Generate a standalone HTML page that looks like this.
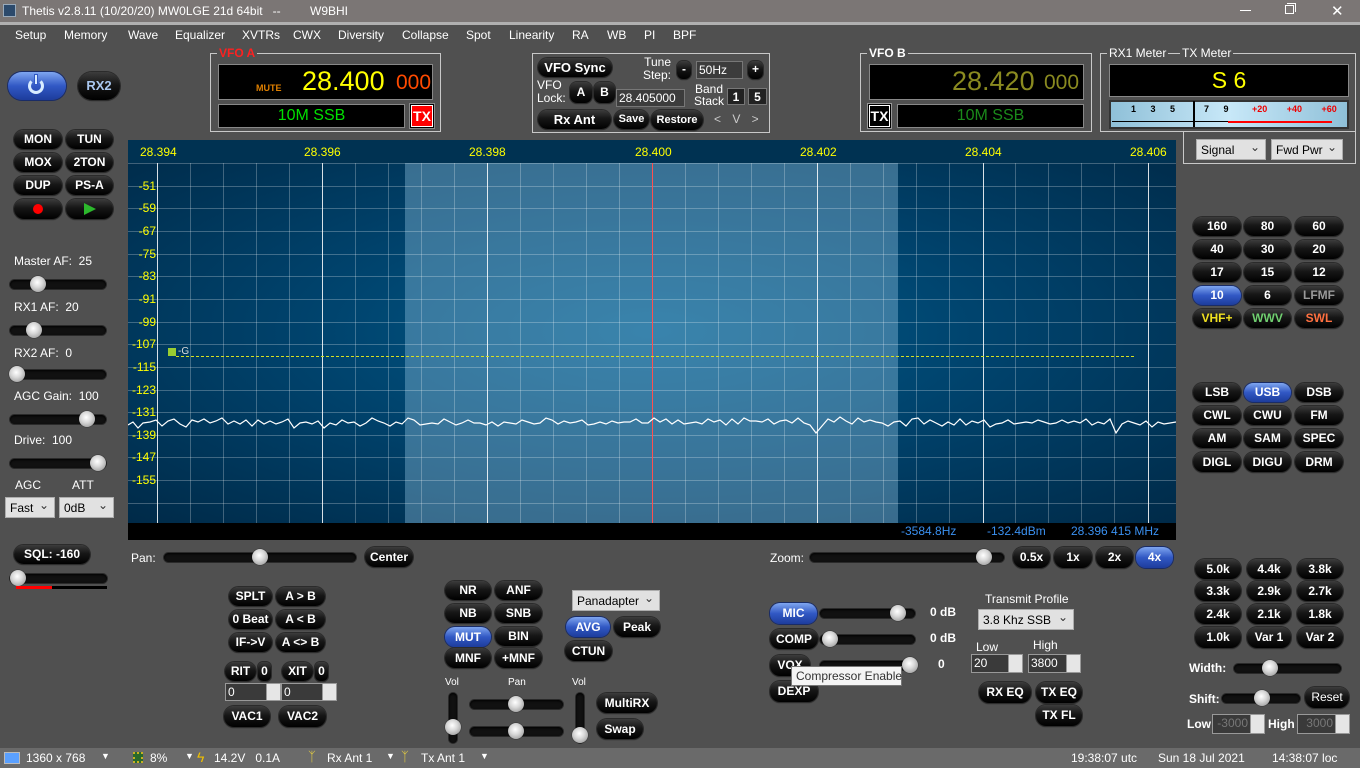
<!DOCTYPE html>
<html><head><meta charset="utf-8">
<style>
*{margin:0;padding:0;box-sizing:border-box}
body{width:1360px;height:768px;overflow:hidden;background:#505050;font-family:"Liberation Sans",Arial,sans-serif;position:relative;color:#fff}
div,span{position:absolute}
.t{font-size:12px;white-space:nowrap;color:#fff}
.b{border-radius:10px;background:linear-gradient(#3c3c3c,#161616 45%,#000);color:#fff;font:bold 12px "Liberation Sans",sans-serif;text-align:center;box-shadow:0 0 0 1px #2b2b2b,0 1px 1px #222;white-space:nowrap}
.bl{background:linear-gradient(#7fa6f0,#3158c4 50%,#1d3c9c);box-shadow:0 0 0 1px #1a2c66}
.g{border:1px solid #c8c8c8}
.gl{font-size:12px;background:#505050;padding:0 2px;white-space:nowrap}
.tr{height:9px;border-radius:5px;background:#111;box-shadow:inset 0 1px 2px #000,0 0 0 1px #2a2a2a}
.th{width:16px;height:16px;border-radius:50%;background:radial-gradient(circle at 45% 40%,#fff,#d8d8d8 40%,#888 100%);box-shadow:0 0 1px #000}
.sel{background:#e1e1e1;color:#000;font-size:12px;border:1px solid #adadad;padding:3px 4px;white-space:nowrap}
.sel:after{content:"⌄";position:absolute;right:5px;top:0px;font-size:12px;color:#333}
.inp{background:#3c3c3c;border:1px solid #777;font-size:12px;color:#fff;padding:1px 2px;white-space:nowrap}
.sp{background:#3a3a3a;border:1px solid #999;font-size:12px;color:#fff;padding:1px 2px}
.sp:after{content:"";position:absolute;right:0;top:0;width:13px;height:100%;background:#e6e6e6;border-left:1px solid #999}
.y{color:#ffff00;font-size:12px;white-space:nowrap}
.db{color:#ffff00;font-size:12px;width:28px;text-align:right;left:128px}
</style></head><body>

<!-- title bar -->
<div style="left:0;top:0;width:1360px;height:22px;background:#7b7675"></div>
<div style="left:3px;top:4px;width:13px;height:13px;background:#2c4a6c;border:1px solid #9ab"></div>
<div class="t" style="left:22px;top:4px;color:#fff">Thetis v2.8.11 (10/20/20) MW0LGE 21d 64bit&nbsp;&nbsp; --</div>
<div class="t" style="left:310px;top:4px">W9BHI</div>
<div style="left:1240px;top:10px;width:11px;height:1px;background:#fff"></div>
<div style="left:1285px;top:5px;width:9px;height:9px;border:1px solid #fff"></div>
<div style="left:1287px;top:3px;width:9px;height:9px;border-top:1px solid #fff;border-right:1px solid #fff"></div>
<div class="t" style="left:1331px;top:2px;font-size:15px">✕</div>
<div style="left:0;top:22px;width:1360px;height:3px;background:#b0b0b0"></div>

<!-- menu -->
<div class="t" style="left:15px;top:28px">Setup</div>
<div class="t" style="left:64px;top:28px">Memory</div>
<div class="t" style="left:128px;top:28px">Wave</div>
<div class="t" style="left:175px;top:28px">Equalizer</div>
<div class="t" style="left:242px;top:28px">XVTRs</div>
<div class="t" style="left:293px;top:28px">CWX</div>
<div class="t" style="left:338px;top:28px">Diversity</div>
<div class="t" style="left:402px;top:28px">Collapse</div>
<div class="t" style="left:466px;top:28px">Spot</div>
<div class="t" style="left:509px;top:28px">Linearity</div>
<div class="t" style="left:572px;top:28px">RA</div>
<div class="t" style="left:607px;top:28px">WB</div>
<div class="t" style="left:644px;top:28px">PI</div>
<div class="t" style="left:673px;top:28px">BPF</div>

<!-- VFO A -->
<div class="g" style="left:210px;top:53px;width:231px;height:79px"></div>
<div class="gl" style="left:217px;top:46px;color:#ff2020;font-weight:bold">VFO A</div>
<div style="left:218px;top:64px;width:215px;height:36px;background:#000;border:1px solid #888"></div>
<div style="left:256px;top:83px;color:#e08000;font-size:9px;font-weight:bold">MUTE</div>
<div style="left:302px;top:66px;color:#ffff00;font-size:27px">28.400</div>
<div style="left:396px;top:71px;color:#ff4a00;font-size:21px">000</div>
<div style="left:218px;top:104px;width:187px;height:24px;background:#000;border:1px solid #888;color:#00e000;font-size:16px;text-align:center;line-height:22px">10M SSB</div>
<div style="left:409px;top:103px;width:26px;height:26px;background:#000;border:1px solid #888"></div>
<div style="left:411px;top:105px;width:22px;height:22px;background:#f00;border:1px solid #fff;color:#fff;font:bold 14px 'Liberation Sans';text-align:center;line-height:20px">TX</div>

<!-- VFO sync group -->
<div class="g" style="left:532px;top:53px;width:238px;height:80px"></div>
<div class="b" style="left:538px;top:58px;width:74px;height:19px;line-height:19px;font-size:13px">VFO Sync</div>
<div class="t" style="left:641px;top:56px;text-align:right;line-height:13px;width:30px">Tune<br>Step:</div>
<div class="b" style="left:677px;top:61px;width:14px;height:18px;line-height:17px;border-radius:6px">-</div>
<div class="inp" style="left:696px;top:61px;width:47px;height:18px">50Hz</div>
<div class="b" style="left:748px;top:61px;width:15px;height:18px;line-height:17px;border-radius:6px">+</div>
<div class="t" style="left:537px;top:79px;line-height:13px">VFO<br>Lock:</div>
<div class="b" style="left:570px;top:82px;width:22px;height:21px;line-height:21px;border-radius:7px">A</div>
<div class="b" style="left:594px;top:82px;width:21px;height:21px;line-height:21px;border-radius:7px">B</div>
<div class="inp" style="left:616px;top:89px;width:69px;height:18px">28.405000</div>
<div class="t" style="left:694px;top:83px;line-height:12px;text-align:center;width:30px">Band<br>Stack</div>
<div class="inp" style="left:727px;top:88px;width:18px;height:17px;font-weight:bold;text-align:center;background:#222">1</div>
<div class="inp" style="left:748px;top:88px;width:19px;height:17px;font-weight:bold;text-align:center;background:#222">5</div>
<div class="b" style="left:538px;top:110px;width:73px;height:19px;line-height:19px;font-size:13px">Rx Ant</div>
<div class="b" style="left:614px;top:110px;width:35px;height:19px;line-height:19px;font-size:11px">Save</div>
<div class="b" style="left:651px;top:110px;width:52px;height:20px;line-height:20px;font-size:11px">Restore</div>
<div class="t" style="left:714px;top:112px;color:#ccc;word-spacing:8px">&lt; V &gt;</div>

<!-- VFO B -->
<div class="g" style="left:860px;top:53px;width:232px;height:79px"></div>
<div class="gl" style="left:867px;top:46px;font-weight:bold">VFO B</div>
<div style="left:869px;top:64px;width:215px;height:36px;background:#000;border:1px solid #888"></div>
<div style="left:952px;top:66px;color:#8a8a20;font-size:27px">28.420</div>
<div style="left:1044px;top:71px;color:#8a8a20;font-size:21px">000</div>
<div style="left:867px;top:103px;width:25px;height:26px;background:#000;border:1px solid #999"></div>
<div style="left:869px;top:105px;width:21px;height:22px;background:#000;border:1px solid #fff;font:bold 14px 'Liberation Sans';text-align:center;line-height:20px">TX</div>
<div style="left:897px;top:104px;width:187px;height:24px;background:#000;border:1px solid #888;color:#1a8a1a;font-size:16px;text-align:center;line-height:22px">10M SSB</div>

<!-- Meter -->
<div class="g" style="left:1100px;top:53px;width:256px;height:79px"></div>
<div class="gl" style="left:1107px;top:46px">RX1 Meter</div>
<div class="gl" style="left:1180px;top:46px">TX Meter</div>
<div style="left:1109px;top:64px;width:240px;height:33px;background:#000;border:1px solid #888;color:#ffff00;font-size:23px;text-align:center;line-height:31px">S 6</div>
<div style="left:1109px;top:100px;width:240px;height:29px;border:2px solid #333;background:linear-gradient(90deg,#8fc0d8,#c8e8f8 50%,#8fc0d8)"></div>
<div style="left:1112px;top:121px;width:120px;height:1px;background:#000"></div>
<div style="left:1228px;top:121px;width:104px;height:2px;background:#f00"></div>
<div style="left:1193px;top:101px;width:2px;height:26px;background:#000"></div>
<div style="left:1131px;top:104px;color:#000;font-size:9px;font-weight:bold;word-spacing:12px">1 3 5 &nbsp;7 9</div>
<div style="left:1252px;top:104px;color:#e00;font-size:9px;font-weight:bold;word-spacing:17px">+20 +40 +60</div>
<div class="g" style="left:1183px;top:132px;width:173px;height:32px;border-top:none"></div>
<div class="sel" style="left:1196px;top:139px;width:70px;height:21px">Signal</div>
<div class="sel" style="left:1271px;top:139px;width:72px;height:21px">Fwd Pwr</div>

<!-- left panel -->
<div class="b bl" style="left:8px;top:72px;width:58px;height:28px;border-radius:14px"></div>
<div style="left:28px;top:78px;width:16px;height:16px;border:3px solid #d8ecff;border-radius:50%;border-top-color:transparent"></div>
<div style="left:34px;top:74px;width:4px;height:11px;background:#d8ecff;border:1px solid #3158c4"></div>
<div class="b" style="left:78px;top:72px;width:42px;height:28px;line-height:28px;font-size:13px;color:#aac8f0;border-radius:14px">RX2</div>

<div class="b" style="left:14px;top:130px;width:48px;height:19px;line-height:19px">MON</div>
<div class="b" style="left:66px;top:130px;width:47px;height:19px;line-height:19px">TUN</div>
<div class="b" style="left:14px;top:153px;width:48px;height:19px;line-height:19px">MOX</div>
<div class="b" style="left:66px;top:153px;width:47px;height:19px;line-height:19px">2TON</div>
<div class="b" style="left:14px;top:176px;width:48px;height:19px;line-height:19px">DUP</div>
<div class="b" style="left:66px;top:176px;width:47px;height:19px;line-height:19px">PS-A</div>
<div class="b" style="left:14px;top:199px;width:48px;height:20px"></div>
<div style="left:33px;top:204px;width:10px;height:10px;border-radius:50%;background:#f00"></div>
<div class="b" style="left:66px;top:199px;width:47px;height:20px"></div>
<div style="left:84px;top:203px;width:0;height:0;border-left:12px solid #2cb82c;border-top:6px solid transparent;border-bottom:6px solid transparent"></div>

<div class="t" style="left:14px;top:254px">Master AF:&nbsp; 25</div>
<div class="tr" style="left:10px;top:280px;width:96px"></div><div class="th" style="left:30px;top:276px"></div>
<div class="t" style="left:14px;top:300px">RX1 AF:&nbsp; 20</div>
<div class="tr" style="left:10px;top:326px;width:96px"></div><div class="th" style="left:26px;top:322px"></div>
<div class="t" style="left:14px;top:346px">RX2 AF:&nbsp; 0</div>
<div class="tr" style="left:10px;top:370px;width:96px"></div><div class="th" style="left:9px;top:366px"></div>
<div class="t" style="left:14px;top:389px">AGC Gain:&nbsp; 100</div>
<div class="tr" style="left:10px;top:415px;width:96px"></div><div class="th" style="left:79px;top:411px"></div>
<div class="t" style="left:14px;top:433px">Drive:&nbsp; 100</div>
<div class="tr" style="left:10px;top:459px;width:96px"></div><div class="th" style="left:90px;top:455px"></div>
<div class="t" style="left:15px;top:478px">AGC</div>
<div class="t" style="left:72px;top:478px">ATT</div>
<div class="sel" style="left:5px;top:497px;width:50px;height:21px">Fast</div>
<div class="sel" style="left:59px;top:497px;width:55px;height:21px">0dB</div>

<div class="b" style="left:14px;top:545px;width:76px;height:19px;line-height:19px">SQL: -160</div>
<div class="tr" style="left:10px;top:574px;width:97px"></div><div class="th" style="left:10px;top:570px"></div>
<div style="left:16px;top:586px;width:36px;height:3px;background:#f00"></div>
<div style="left:52px;top:586px;width:55px;height:3px;background:#000"></div>

<!-- spectrum -->
<div style="left:128px;top:140px;width:1048px;height:383px;background:radial-gradient(ellipse at 50% 50%,#005a8a 0%,#00416a 50%,#002a48 100%);overflow:hidden">
<div style="left:0;top:0;width:1048px;height:23px;background:#003252"></div>
<div style="left:277px;top:23px;width:493px;height:360px;background:rgba(150,200,230,0.38)"></div>
<svg width="1048" height="383" style="position:absolute;left:0;top:0">
<g stroke="rgba(255,255,255,0.25)" stroke-width="1">
<line x1="0" y1="23.5" x2="1048" y2="23.5"/><line x1="0" y1="46.5" x2="1048" y2="46.5"/><line x1="0" y1="68.5" x2="1048" y2="68.5"/><line x1="0" y1="91.5" x2="1048" y2="91.5"/><line x1="0" y1="114.5" x2="1048" y2="114.5"/><line x1="0" y1="136.5" x2="1048" y2="136.5"/><line x1="0" y1="159.5" x2="1048" y2="159.5"/><line x1="0" y1="182.5" x2="1048" y2="182.5"/><line x1="0" y1="204.5" x2="1048" y2="204.5"/><line x1="0" y1="227.5" x2="1048" y2="227.5"/><line x1="0" y1="250.5" x2="1048" y2="250.5"/><line x1="0" y1="272.5" x2="1048" y2="272.5"/><line x1="0" y1="295.5" x2="1048" y2="295.5"/><line x1="0" y1="317.5" x2="1048" y2="317.5"/><line x1="0" y1="340.5" x2="1048" y2="340.5"/><line x1="0" y1="363.5" x2="1048" y2="363.5"/>
<line x1="62.5" y1="23" x2="62.5" y2="383"/><line x1="95.5" y1="23" x2="95.5" y2="383"/><line x1="128.5" y1="23" x2="128.5" y2="383"/><line x1="161.5" y1="23" x2="161.5" y2="383"/><line x1="227.5" y1="23" x2="227.5" y2="383"/><line x1="260.5" y1="23" x2="260.5" y2="383"/><line x1="293.5" y1="23" x2="293.5" y2="383"/><line x1="326.5" y1="23" x2="326.5" y2="383"/><line x1="392.5" y1="23" x2="392.5" y2="383"/><line x1="425.5" y1="23" x2="425.5" y2="383"/><line x1="458.5" y1="23" x2="458.5" y2="383"/><line x1="491.5" y1="23" x2="491.5" y2="383"/><line x1="557.5" y1="23" x2="557.5" y2="383"/><line x1="590.5" y1="23" x2="590.5" y2="383"/><line x1="623.5" y1="23" x2="623.5" y2="383"/><line x1="656.5" y1="23" x2="656.5" y2="383"/><line x1="722.5" y1="23" x2="722.5" y2="383"/><line x1="755.5" y1="23" x2="755.5" y2="383"/><line x1="788.5" y1="23" x2="788.5" y2="383"/><line x1="821.5" y1="23" x2="821.5" y2="383"/><line x1="887.5" y1="23" x2="887.5" y2="383"/><line x1="920.5" y1="23" x2="920.5" y2="383"/><line x1="953.5" y1="23" x2="953.5" y2="383"/><line x1="986.5" y1="23" x2="986.5" y2="383"/>
</g>
<g stroke="rgba(255,255,255,0.85)" stroke-width="1">
<line x1="29.5" y1="23" x2="29.5" y2="383"/><line x1="194.5" y1="23" x2="194.5" y2="383"/><line x1="359.5" y1="23" x2="359.5" y2="383"/><line x1="689.5" y1="23" x2="689.5" y2="383"/><line x1="855.5" y1="23" x2="855.5" y2="383"/><line x1="1020.5" y1="23" x2="1020.5" y2="383"/>
</g>
<line x1="524.5" y1="23" x2="524.5" y2="383" stroke="#ff5050" stroke-width="1"/>
<rect x="40" y="208" width="8" height="8" fill="#9acd32"/>
<text x="50" y="214" fill="#ddd" font-size="10" font-family="Liberation Sans">-G</text>
<line x1="48" y1="216.5" x2="1007" y2="216.5" stroke="#d8e020" stroke-dasharray="3,2"/>
<polyline fill="none" stroke="#fff" stroke-width="1.2" points="0,285 5,282 10,288 15,283 22,282 28,280 34,286 40,281 46,279 52,284 58,287 64,280 70,282 76,279 82,283 88,281 94,278 100,284 106,281 112,284 118,280 124,286 130,280 136,284 142,281 148,284 154,282 160,279 166,288 172,283 178,282 184,284 190,281 196,288 202,283 208,285 214,280 220,283 226,282 232,286 238,283 244,278 250,281 256,283 262,286 268,282 274,284 280,278 286,280 292,285 298,284 304,283 310,284 316,279 322,282 328,285 334,283 340,280 346,283 352,283 358,285 364,282 370,286 376,282 382,283 388,284 394,280 400,282 406,284 412,283 418,278 424,280 430,284 436,281 442,283 448,282 454,280 460,285 466,284 472,282 478,284 484,281 490,283 496,282 502,282 508,279 514,283 520,283 526,278 532,282 538,279 544,284 550,280 556,284 562,283 568,282 574,284 580,279 586,282 592,280 598,285 604,279 610,284 616,278 622,281 628,281 634,282 640,279 646,284 652,281 658,280 664,283 670,278 676,283 682,285 688,293 694,286 700,279 706,282 712,277 718,281 724,284 730,278 736,282 742,280 748,282 754,283 760,286 766,282 772,281 778,286 784,279 790,278 796,284 802,280 808,283 814,286 820,282 826,285 832,279 838,285 844,281 850,283 856,280 862,287 868,284 874,283 880,280 886,284 892,283 898,282 904,283 910,280 916,282 922,284 928,283 934,280 940,283 946,281 952,283 958,279 964,285 970,282 976,284 982,279 988,293 994,284 1000,281 1006,283 1012,285 1018,281 1024,287 1030,282 1036,284 1042,283 1048,282"/>
</svg>
<div class="y" style="left:12px;top:5px">28.394</div>
<div class="y" style="left:176px;top:5px">28.396</div>
<div class="y" style="left:341px;top:5px">28.398</div>
<div class="y" style="left:507px;top:5px">28.400</div>
<div class="y" style="left:672px;top:5px">28.402</div>
<div class="y" style="left:837px;top:5px">28.404</div>
<div class="y" style="left:1002px;top:5px">28.406</div>
<div class="db" style="left:0;top:39px">-51</div>
<div class="db" style="left:0;top:61px">-59</div>
<div class="db" style="left:0;top:84px">-67</div>
<div class="db" style="left:0;top:107px">-75</div>
<div class="db" style="left:0;top:129px">-83</div>
<div class="db" style="left:0;top:152px">-91</div>
<div class="db" style="left:0;top:175px">-99</div>
<div class="db" style="left:0;top:197px">-107</div>
<div class="db" style="left:0;top:220px">-115</div>
<div class="db" style="left:0;top:243px">-123</div>
<div class="db" style="left:0;top:265px">-131</div>
<div class="db" style="left:0;top:288px">-139</div>
<div class="db" style="left:0;top:310px">-147</div>
<div class="db" style="left:0;top:333px">-155</div>
</div>
<div style="left:128px;top:523px;width:1048px;height:17px;background:#000"></div>
<div style="left:901px;top:524px;color:#3a90f0;font-size:12px">-3584.8Hz</div>
<div style="left:987px;top:524px;color:#3a90f0;font-size:12px">-132.4dBm</div>
<div style="left:1071px;top:524px;color:#3a90f0;font-size:12px">28.396 415 MHz</div>

<!-- pan / zoom -->
<div class="t" style="left:131px;top:551px">Pan:</div>
<div class="tr" style="left:164px;top:553px;width:192px"></div><div class="th" style="left:252px;top:549px"></div>
<div class="b" style="left:365px;top:547px;width:48px;height:20px;line-height:20px">Center</div>
<div class="t" style="left:770px;top:551px">Zoom:</div>
<div class="tr" style="left:810px;top:553px;width:194px"></div><div class="th" style="left:976px;top:549px"></div>
<div class="b" style="left:1013px;top:547px;width:37px;height:21px;line-height:21px">0.5x</div>
<div class="b" style="left:1054px;top:547px;width:38px;height:21px;line-height:21px">1x</div>
<div class="b" style="left:1096px;top:547px;width:37px;height:21px;line-height:21px">2x</div>
<div class="b bl" style="left:1136px;top:547px;width:37px;height:21px;line-height:21px">4x</div>

<!-- middle buttons -->
<div class="b" style="left:229px;top:587px;width:43px;height:19px;line-height:19px">SPLT</div>
<div class="b" style="left:276px;top:587px;width:49px;height:19px;line-height:19px">A &gt; B</div>
<div class="b" style="left:229px;top:610px;width:43px;height:19px;line-height:19px">0 Beat</div>
<div class="b" style="left:276px;top:610px;width:49px;height:19px;line-height:19px">A &lt; B</div>
<div class="b" style="left:229px;top:633px;width:43px;height:19px;line-height:19px">IF-&gt;V</div>
<div class="b" style="left:276px;top:633px;width:49px;height:19px;line-height:19px">A &lt;&gt; B</div>
<div class="b" style="left:225px;top:662px;width:31px;height:19px;line-height:19px">RIT</div>
<div class="b" style="left:258px;top:662px;width:13px;height:19px;line-height:19px;border-radius:5px">0</div>
<div class="b" style="left:282px;top:662px;width:31px;height:19px;line-height:19px">XIT</div>
<div class="b" style="left:315px;top:662px;width:13px;height:19px;line-height:19px;border-radius:5px">0</div>
<div class="sp" style="left:225px;top:683px;width:56px;height:18px">0</div>
<div class="sp" style="left:281px;top:683px;width:56px;height:18px">0</div>
<div class="b" style="left:224px;top:706px;width:46px;height:21px;line-height:21px">VAC1</div>
<div class="b" style="left:279px;top:706px;width:47px;height:21px;line-height:21px">VAC2</div>

<div class="b" style="left:445px;top:581px;width:46px;height:19px;line-height:19px">NR</div>
<div class="b" style="left:495px;top:581px;width:47px;height:19px;line-height:19px">ANF</div>
<div class="b" style="left:445px;top:604px;width:46px;height:19px;line-height:19px">NB</div>
<div class="b" style="left:495px;top:604px;width:47px;height:19px;line-height:19px">SNB</div>
<div class="b bl" style="left:445px;top:627px;width:46px;height:20px;line-height:20px">MUT</div>
<div class="b" style="left:495px;top:627px;width:47px;height:19px;line-height:19px">BIN</div>
<div class="b" style="left:445px;top:648px;width:46px;height:20px;line-height:20px">MNF</div>
<div class="b" style="left:495px;top:648px;width:47px;height:20px;line-height:20px">+MNF</div>
<div class="sel" style="left:572px;top:590px;width:88px;height:21px">Panadapter</div>
<div class="b bl" style="left:566px;top:617px;width:44px;height:20px;line-height:20px">AVG</div>
<div class="b" style="left:614px;top:617px;width:46px;height:20px;line-height:20px">Peak</div>
<div class="b" style="left:565px;top:641px;width:47px;height:20px;line-height:20px">CTUN</div>
<div class="t" style="left:445px;top:677px;font-size:10px">Vol</div>
<div class="t" style="left:508px;top:677px;font-size:10px">Pan</div>
<div class="t" style="left:572px;top:677px;font-size:10px">Vol</div>
<div class="tr" style="left:449px;top:693px;width:8px;height:50px"></div><div class="th" style="left:445px;top:719px"></div>
<div class="tr" style="left:470px;top:700px;width:93px"></div><div class="th" style="left:508px;top:696px"></div>
<div class="tr" style="left:470px;top:727px;width:93px"></div><div class="th" style="left:508px;top:723px"></div>
<div class="tr" style="left:576px;top:693px;width:8px;height:50px"></div><div class="th" style="left:572px;top:727px"></div>
<div class="b" style="left:597px;top:693px;width:60px;height:20px;line-height:20px">MultiRX</div>
<div class="b" style="left:597px;top:719px;width:46px;height:20px;line-height:20px">Swap</div>

<!-- TX area -->
<div class="b bl" style="left:770px;top:603px;width:47px;height:21px;line-height:21px">MIC</div>
<div class="tr" style="left:820px;top:609px;width:95px"></div><div class="th" style="left:890px;top:605px"></div>
<div class="t" style="left:930px;top:605px;font-weight:bold">0 dB</div>
<div class="b" style="left:770px;top:629px;width:48px;height:20px;line-height:20px">COMP</div>
<div class="tr" style="left:820px;top:635px;width:95px"></div><div class="th" style="left:822px;top:631px"></div>
<div class="t" style="left:930px;top:631px;font-weight:bold">0 dB</div>
<div class="b" style="left:770px;top:655px;width:40px;height:21px;line-height:21px">VOX</div>
<div class="tr" style="left:820px;top:661px;width:95px"></div><div class="th" style="left:902px;top:657px"></div>
<div class="t" style="left:938px;top:657px;font-weight:bold">0</div>
<div class="b" style="left:770px;top:681px;width:48px;height:21px;line-height:21px">DEXP</div>
<div style="left:791px;top:666px;width:111px;height:20px;background:#f4f4f4;border:1px solid #767676;color:#333;font-size:12px;line-height:18px;padding-left:4px;white-space:nowrap">Compressor Enable</div>
<div class="t" style="left:985px;top:592px">Transmit Profile</div>
<div class="sel" style="left:978px;top:609px;width:96px;height:21px">3.8 Khz SSB</div>
<div class="t" style="left:976px;top:640px">Low</div>
<div class="t" style="left:1033px;top:638px">High</div>
<div class="sp" style="left:971px;top:654px;width:52px;height:19px">20</div>
<div class="sp" style="left:1028px;top:654px;width:53px;height:19px">3800</div>
<div class="b" style="left:979px;top:682px;width:52px;height:21px;line-height:21px">RX EQ</div>
<div class="b" style="left:1036px;top:682px;width:46px;height:21px;line-height:21px">TX EQ</div>
<div class="b" style="left:1036px;top:705px;width:46px;height:21px;line-height:21px">TX FL</div>

<!-- band buttons -->
<div class="b" style="left:1193px;top:217px;width:48px;height:19px;line-height:19px">160</div>
<div class="b" style="left:1244px;top:217px;width:47px;height:19px;line-height:19px">80</div>
<div class="b" style="left:1295px;top:217px;width:48px;height:19px;line-height:19px">60</div>
<div class="b" style="left:1193px;top:240px;width:48px;height:19px;line-height:19px">40</div>
<div class="b" style="left:1244px;top:240px;width:47px;height:19px;line-height:19px">30</div>
<div class="b" style="left:1295px;top:240px;width:48px;height:19px;line-height:19px">20</div>
<div class="b" style="left:1193px;top:263px;width:48px;height:19px;line-height:19px">17</div>
<div class="b" style="left:1244px;top:263px;width:47px;height:19px;line-height:19px">15</div>
<div class="b" style="left:1295px;top:263px;width:48px;height:19px;line-height:19px">12</div>
<div class="b bl" style="left:1193px;top:286px;width:48px;height:19px;line-height:19px">10</div>
<div class="b" style="left:1244px;top:286px;width:47px;height:19px;line-height:19px">6</div>
<div class="b" style="left:1295px;top:286px;width:48px;height:19px;line-height:19px;color:#999">LFMF</div>
<div class="b" style="left:1193px;top:309px;width:48px;height:19px;line-height:19px;color:#f0e020">VHF+</div>
<div class="b" style="left:1244px;top:309px;width:47px;height:19px;line-height:19px;color:#70d070">WWV</div>
<div class="b" style="left:1295px;top:309px;width:48px;height:19px;line-height:19px;color:#ff7040">SWL</div>

<div class="b" style="left:1193px;top:383px;width:48px;height:19px;line-height:19px">LSB</div>
<div class="b bl" style="left:1244px;top:383px;width:47px;height:19px;line-height:19px">USB</div>
<div class="b" style="left:1295px;top:383px;width:48px;height:19px;line-height:19px">DSB</div>
<div class="b" style="left:1193px;top:406px;width:48px;height:19px;line-height:19px">CWL</div>
<div class="b" style="left:1244px;top:406px;width:47px;height:19px;line-height:19px">CWU</div>
<div class="b" style="left:1295px;top:406px;width:48px;height:19px;line-height:19px">FM</div>
<div class="b" style="left:1193px;top:429px;width:48px;height:19px;line-height:19px">AM</div>
<div class="b" style="left:1244px;top:429px;width:47px;height:19px;line-height:19px">SAM</div>
<div class="b" style="left:1295px;top:429px;width:48px;height:19px;line-height:19px">SPEC</div>
<div class="b" style="left:1193px;top:452px;width:48px;height:20px;line-height:20px">DIGL</div>
<div class="b" style="left:1244px;top:452px;width:47px;height:20px;line-height:20px">DIGU</div>
<div class="b" style="left:1295px;top:452px;width:48px;height:20px;line-height:20px">DRM</div>

<!-- filter -->
<div class="b" style="left:1195px;top:559px;width:46px;height:20px;line-height:20px">5.0k</div>
<div class="b" style="left:1247px;top:559px;width:44px;height:20px;line-height:20px">4.4k</div>
<div class="b" style="left:1297px;top:559px;width:46px;height:20px;line-height:20px">3.8k</div>
<div class="b" style="left:1195px;top:581px;width:46px;height:20px;line-height:20px">3.3k</div>
<div class="b" style="left:1247px;top:581px;width:44px;height:20px;line-height:20px">2.9k</div>
<div class="b" style="left:1297px;top:581px;width:46px;height:20px;line-height:20px">2.7k</div>
<div class="b" style="left:1195px;top:604px;width:46px;height:20px;line-height:20px">2.4k</div>
<div class="b" style="left:1247px;top:604px;width:44px;height:20px;line-height:20px">2.1k</div>
<div class="b" style="left:1297px;top:604px;width:46px;height:20px;line-height:20px">1.8k</div>
<div class="b" style="left:1195px;top:627px;width:46px;height:21px;line-height:21px">1.0k</div>
<div class="b" style="left:1247px;top:627px;width:44px;height:21px;line-height:21px">Var 1</div>
<div class="b" style="left:1297px;top:627px;width:46px;height:21px;line-height:21px">Var 2</div>
<div class="t" style="left:1189px;top:661px;font-weight:bold">Width:</div>
<div class="tr" style="left:1234px;top:664px;width:107px"></div><div class="th" style="left:1262px;top:660px"></div>
<div class="t" style="left:1189px;top:692px;font-weight:bold">Shift:</div>
<div class="tr" style="left:1222px;top:694px;width:78px"></div><div class="th" style="left:1254px;top:690px"></div>
<div class="b" style="left:1305px;top:687px;width:44px;height:21px;line-height:21px;font-weight:normal">Reset</div>
<div class="t" style="left:1187px;top:717px;font-weight:bold">Low</div>
<div class="sp" style="left:1212px;top:714px;width:53px;height:20px;color:#777;text-align:right;padding-right:16px">-3000</div>
<div class="t" style="left:1268px;top:717px;font-weight:bold">High</div>
<div class="sp" style="left:1297px;top:714px;width:53px;height:20px;color:#777;text-align:right;padding-right:16px">3000</div>

<!-- status bar -->
<div style="left:0;top:748px;width:1360px;height:20px;background:#6a6a6a"></div>
<div style="left:4px;top:752px;width:16px;height:12px;background:#5aa0ff;border:1px solid #bbb"></div>
<div class="t" style="left:26px;top:751px">1360 x 768</div>
<div class="t" style="left:101px;top:751px;font-size:9px">▼</div>
<div style="left:133px;top:752px;width:10px;height:11px;background:#2a6a2a;border:2px dotted #c8b020"></div>
<div class="t" style="left:150px;top:751px">8%</div>
<div class="t" style="left:185px;top:751px;font-size:9px">▼</div>
<div class="t" style="left:197px;top:749px;color:#f0c000;font-size:14px">ϟ</div>
<div class="t" style="left:214px;top:751px">14.2V&nbsp;&nbsp; 0.1A</div>
<div class="t" style="left:308px;top:749px;color:#e8d040;font-size:13px">ᛉ</div>
<div class="t" style="left:327px;top:751px">Rx Ant 1</div>
<div class="t" style="left:386px;top:751px;font-size:9px">▼</div>
<div class="t" style="left:401px;top:749px;color:#e8d040;font-size:13px">ᛉ</div>
<div class="t" style="left:421px;top:751px">Tx Ant 1</div>
<div class="t" style="left:480px;top:751px;font-size:9px">▼</div>
<div class="t" style="left:1071px;top:751px">19:38:07 utc</div>
<div class="t" style="left:1158px;top:751px">Sun 18 Jul 2021</div>
<div class="t" style="left:1272px;top:751px">14:38:07 loc</div>
</body></html>
